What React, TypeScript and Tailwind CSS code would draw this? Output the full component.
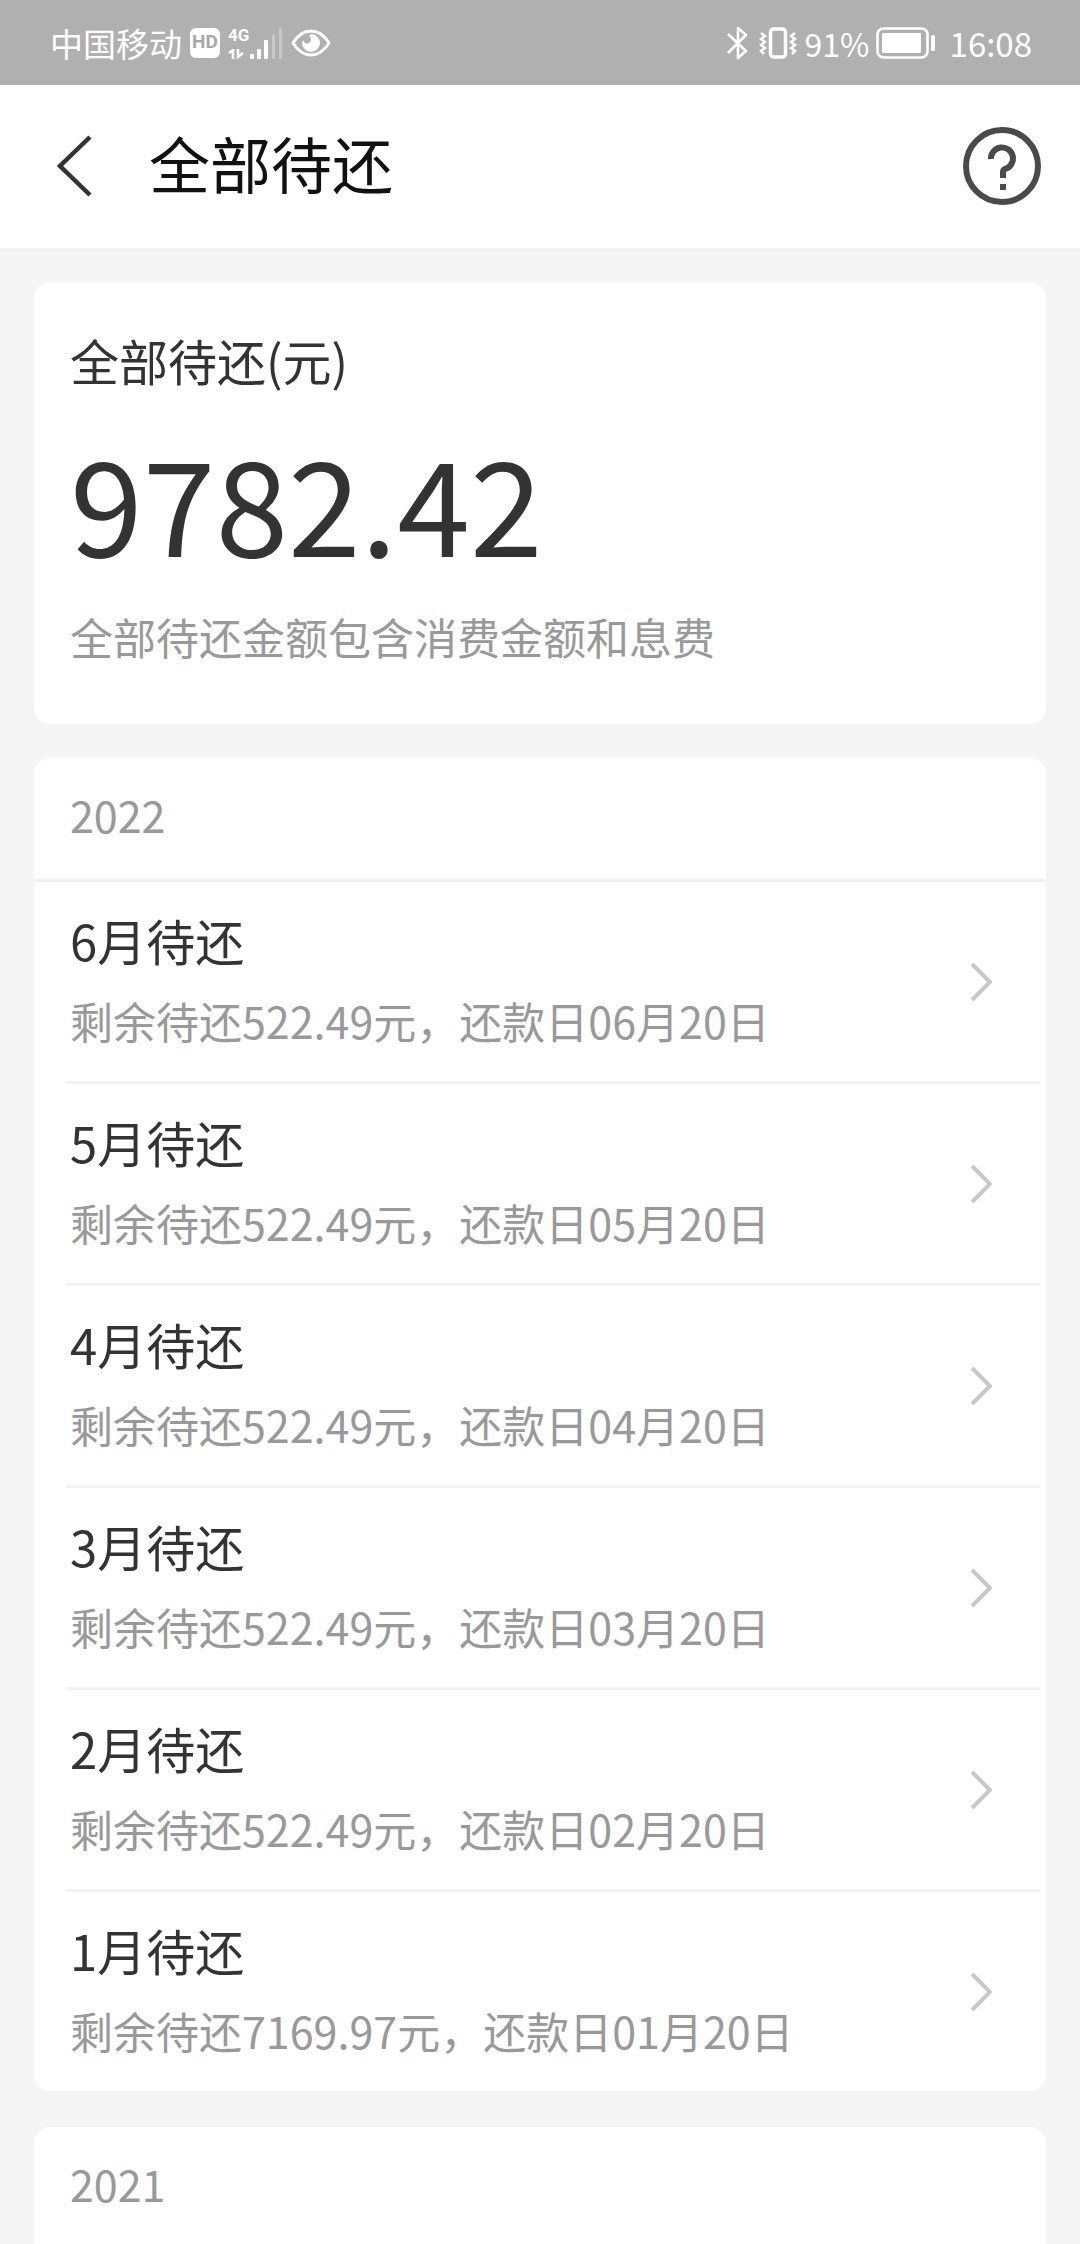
const bills = [
  { month: "6月", amount: "522.49", due: "06月20日" },
  { month: "5月", amount: "522.49", due: "05月20日" },
  { month: "4月", amount: "522.49", due: "04月20日" },
  { month: "3月", amount: "522.49", due: "03月20日" },
  { month: "2月", amount: "522.49", due: "02月20日" },
  { month: "1月", amount: "7169.97", due: "01月20日" },
];

function SignalIcon() {
  return (
    <svg className="w-[34px] h-8" viewBox="0 0 34 32" fill="currentColor" aria-hidden="true">
      <rect x="1" y="27" width="4" height="5" rx="1" />
      <rect x="8" y="22" width="4" height="10" rx="1" />
      <rect x="15" y="13" width="4" height="19" rx="1" />
      <rect x="23" y="7" width="3" height="25" rx="1" opacity="0.3" />
      <rect x="30" y="1" width="3" height="31" rx="1" opacity="0.3" />
    </svg>
  );
}

function EyeIcon() {
  return (
    <svg className="w-10 h-7" viewBox="0 0 40 28" fill="none" aria-hidden="true">
      <path d="M2 14C7 6 13 2 20 2s13 4 18 12c-5 8-11 12-18 12S7 22 2 14Z" stroke="currentColor" strokeWidth="3" strokeLinejoin="round" />
      <path d="M20 5a9 9 0 1 1-9 9l1-3a4 4 0 1 0 6-4Z" fill="currentColor" />
    </svg>
  );
}

function BluetoothIcon() {
  return (
    <svg className="w-[22px] h-[34px]" viewBox="0 0 22 34" fill="none" aria-hidden="true">
      <path d="M1 8l18 17-8 7V2l8 7L1 27" stroke="currentColor" strokeWidth="2.6" strokeLinejoin="round" />
    </svg>
  );
}

function VibrateIcon() {
  return (
    <svg className="w-[38px] h-8" viewBox="0 0 38 32" fill="none" stroke="currentColor" aria-hidden="true">
      <rect x="11.5" y="2" width="15" height="28" rx="3" strokeWidth="3.5" />
      <path d="M2 6l4 3-4 3 4 3-4 3 4 3-4 3 3 3M36 6l-4 3 4 3-4 3 4 3-4 3 4 3-3 3" strokeWidth="2.5" />
    </svg>
  );
}

function BatteryIcon() {
  return (
    <svg className="w-[60px] h-8" viewBox="0 0 60 32" fill="none" aria-hidden="true">
      <rect x="1.5" y="1.5" width="50" height="29" rx="6" stroke="currentColor" strokeWidth="2.6" />
      <rect x="6" y="6" width="39" height="20" rx="1" fill="currentColor" />
      <rect x="55" y="8" width="4" height="16" rx="1.5" fill="currentColor" />
    </svg>
  );
}

function StatusBar() {
  return (
    <div className="flex items-center justify-between h-[85px] pl-[50px] pr-12 bg-[#b0b0b0] text-white">
      <div className="flex items-center">
        <span className="text-[33px] leading-10">中国移动</span>
        <span className="flex items-center justify-center w-[30px] h-[30px] ml-2 rounded-md bg-white text-[#a8a8a8] text-[19px] font-bold font-['Roboto',sans-serif]">
          HD
        </span>
        <span className="flex flex-col justify-between h-8 ml-2">
          <span className="text-[17px] leading-4 font-bold font-['Roboto',sans-serif]">4G</span>
          <svg className="w-4 h-[10px]" viewBox="0 0 16 10" fill="none" stroke="currentColor" strokeWidth="2.5" aria-hidden="true">
            <path d="M1 4l4-3v9M10 0v8l5-4" />
          </svg>
        </span>
        <SignalIcon />
        <span className="ml-2">
          <EyeIcon />
        </span>
      </div>
      <div className="flex items-center">
        <BluetoothIcon />
        <span className="ml-[10px]">
          <VibrateIcon />
        </span>
        <span className="ml-2 text-[32px] leading-10">91%</span>
        <span className="ml-1.5">
          <BatteryIcon />
        </span>
        <span className="ml-3.5 text-[33px] leading-10">16:08</span>
      </div>
    </div>
  );
}

function Header() {
  return (
    <header className="flex items-center h-[167px] pb-[2px] pl-[55px] pr-[39px] bg-white border-b-4 border-[#f1f1f1]">
      <button type="button" aria-label="返回">
        <svg className="w-10 h-16" viewBox="0 0 40 64" fill="none" stroke="#333333" strokeWidth="4.5" aria-hidden="true">
          <path d="M35 3L5 32l30 29" />
        </svg>
      </button>
      <h1 className="flex-1 ml-[54px] pb-1.5 text-[61px] leading-[72px] text-[#111111]">全部待还</h1>
      <button type="button" aria-label="帮助">
        <svg className="w-[78px] h-[78px]" viewBox="0 0 78 78" fill="none" stroke="#4a4a4a" strokeWidth="6" aria-hidden="true">
          <circle cx="39" cy="39" r="36" />
          <path d="M28 32a11 11 0 1 1 14 10q-2 1-2 3v6" />
          <path d="M37 60h6" />
        </svg>
      </button>
    </header>
  );
}

function BillRow({ month, amount, due }: { month: string; amount: string; due: string }) {
  return (
    <li className="border-b-[3px] border-[#f3f3f3] last:border-b-0">
      <button type="button" className="flex items-center justify-between w-full h-[199px] pl-1 pr-12 text-left">
        <span className="flex flex-col gap-4 pb-1">
          <span className="text-[49px] leading-[64px] text-[#333333]">{month}待还</span>
          <span className="text-[43px] leading-[64px] text-[#999999]">
            剩余待还{amount}元，还款日{due}
          </span>
        </span>
        <svg className="w-6 h-10" viewBox="0 0 24 40" fill="none" stroke="#c8c8c8" strokeWidth="4" aria-hidden="true">
          <path d="M4 2l18 18L4 38" />
        </svg>
      </button>
    </li>
  );
}

export default function App() {
  return (
    <div className="flex flex-col min-h-screen bg-[#f5f5f5] font-['Noto_Sans_CJK_SC',sans-serif]">
      <StatusBar />
      <Header />
      <main className="flex flex-col flex-1 px-[34px] pt-[30px]">
        <section className="px-9 pt-[46px] pb-14 rounded-2xl bg-white">
          <h2 className="text-[49px] leading-[64px] text-[#333333]">全部待还(元)</h2>
          <p className="mt-4 text-[131px] leading-[184px] text-[#333333]">9782.42</p>
          <p className="mt-3 text-[43px] leading-[64px] text-[#999999]">全部待还金额包含消费金额和息费</p>
        </section>

        <section className="mt-[34px] rounded-2xl bg-white">
          <h2 className="px-9 pt-6 pb-[33px] text-[43px] leading-[64px] text-[#999999] border-b-[3px] border-[#f1f1f1]">2022</h2>
          <ul className="pl-8 pr-[6px]">
            {bills.map((bill) => (
              <BillRow key={bill.month} {...bill} />
            ))}
          </ul>
        </section>

        <section className="flex-1 mt-9 rounded-t-2xl bg-white">
          <h2 className="px-9 pt-6 text-[43px] leading-[64px] text-[#999999]">2021</h2>
        </section>
      </main>
    </div>
  );
}
